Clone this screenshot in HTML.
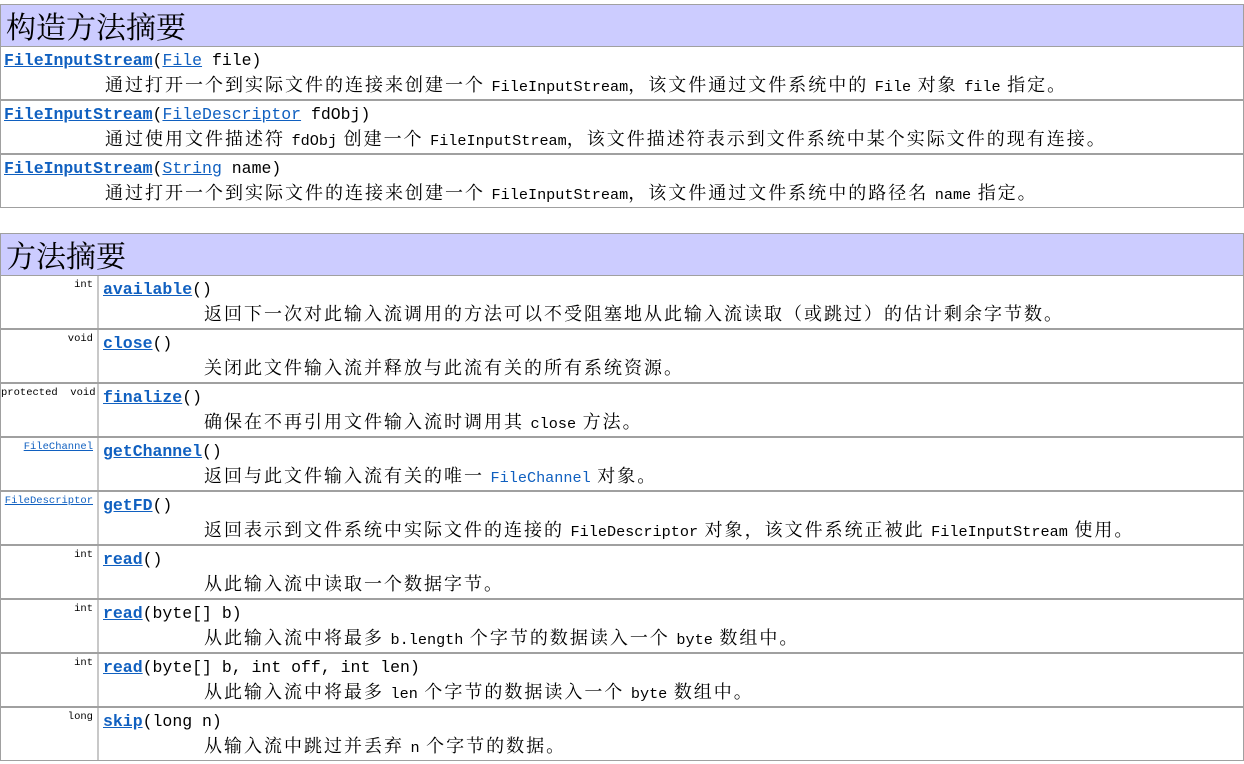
<!DOCTYPE html>
<html><head><meta charset="utf-8"><style>
body{margin:0;background:#fff;width:1244px;height:764px;overflow:hidden;position:relative;font-family:"Liberation Sans","Noto Sans CJK SC",sans-serif;}
.hd{position:absolute;left:0;height:40px;background:#ccccff;border:1px solid #a0a0a0;font-size:30px;line-height:40px;padding-left:5px;box-sizing:border-box;width:1244px;font-family:"Noto Serif CJK SC","Noto Sans CJK SC",serif;color:#000}
.row{position:absolute;left:0;width:1244px;height:54px;border:1px solid #a0a0a0;box-sizing:border-box;}
.l{position:absolute;left:0;top:0;width:98px;height:52px;border-right:2px solid #c8c8c8;font-family:"Liberation Mono",monospace;font-size:10.5px;text-align:right;padding:3px 4px 0 0;box-sizing:border-box;white-space:nowrap}
.l a{color:#1060c0;text-decoration:underline}
.sig{position:absolute;top:4px;font-family:"Liberation Mono",monospace;font-size:16.5px;white-space:nowrap;color:#000}
.sig a{color:#1060c0;text-decoration:underline}
.sig b a{font-weight:bold}
.d{position:absolute;top:24px;font-size:18px;letter-spacing:2px;white-space:nowrap;color:#000;font-family:"Liberation Serif","Noto Serif CJK SC",serif}
.m{font-family:"Liberation Mono",monospace;font-size:15.2px;letter-spacing:0}
.d a{color:#1060c0}
</style></head><body>
<div class="hd" style="top:4px;height:43px">构造方法摘要</div>
<div class="row" style="top:46px"><div class="sig" style="left:3px"><b><a>FileInputStream</a></b>(<a>File</a> file)</div><div class="d" style="left:104px">通过打开一个到实际文件的连接来创建一个 <span class="m">FileInputStream</span>，该文件通过文件系统中的 <span class="m">File</span> 对象 <span class="m">file</span> 指定。</div></div>
<div class="row" style="top:100px"><div class="sig" style="left:3px"><b><a>FileInputStream</a></b>(<a>FileDescriptor</a> fdObj)</div><div class="d" style="left:104px">通过使用文件描述符 <span class="m">fdObj</span> 创建一个 <span class="m">FileInputStream</span>，该文件描述符表示到文件系统中某个实际文件的现有连接。</div></div>
<div class="row" style="top:154px"><div class="sig" style="left:3px"><b><a>FileInputStream</a></b>(<a>String</a> name)</div><div class="d" style="left:104px">通过打开一个到实际文件的连接来创建一个 <span class="m">FileInputStream</span>，该文件通过文件系统中的路径名 <span class="m">name</span> 指定。</div></div>

<div class="hd" style="top:233px;height:43px">方法摘要</div>
<div class="row" style="top:275px"><div class="l">int</div><div class="sig" style="left:102px"><b><a>available</a></b>()</div><div class="d" style="left:203px">返回下一次对此输入流调用的方法可以不受阻塞地从此输入流读取（或跳过）的估计剩余字节数。</div></div>
<div class="row" style="top:329px"><div class="l">void</div><div class="sig" style="left:102px"><b><a>close</a></b>()</div><div class="d" style="left:203px">关闭此文件输入流并释放与此流有关的所有系统资源。</div></div>
<div class="row" style="top:383px"><div class="l">protected&nbsp; void</div><div class="sig" style="left:102px"><b><a>finalize</a></b>()</div><div class="d" style="left:203px">确保在不再引用文件输入流时调用其 <span class="m">close</span> 方法。</div></div>
<div class="row" style="top:437px"><div class="l"><a>FileChannel</a></div><div class="sig" style="left:102px"><b><a>getChannel</a></b>()</div><div class="d" style="left:203px">返回与此文件输入流有关的唯一 <a class="m">FileChannel</a> 对象。</div></div>
<div class="row" style="top:491px"><div class="l"><a>FileDescriptor</a></div><div class="sig" style="left:102px"><b><a>getFD</a></b>()</div><div class="d" style="left:203px">返回表示到文件系统中实际文件的连接的 <span class="m">FileDescriptor</span> 对象，该文件系统正被此 <span class="m">FileInputStream</span> 使用。</div></div>
<div class="row" style="top:545px"><div class="l">int</div><div class="sig" style="left:102px"><b><a>read</a></b>()</div><div class="d" style="left:203px">从此输入流中读取一个数据字节。</div></div>
<div class="row" style="top:599px"><div class="l">int</div><div class="sig" style="left:102px"><b><a>read</a></b>(byte[] b)</div><div class="d" style="left:203px">从此输入流中将最多 <span class="m">b.length</span> 个字节的数据读入一个 <span class="m">byte</span> 数组中。</div></div>
<div class="row" style="top:653px"><div class="l">int</div><div class="sig" style="left:102px"><b><a>read</a></b>(byte[] b, int off, int len)</div><div class="d" style="left:203px">从此输入流中将最多 <span class="m">len</span> 个字节的数据读入一个 <span class="m">byte</span> 数组中。</div></div>
<div class="row" style="top:707px"><div class="l">long</div><div class="sig" style="left:102px"><b><a>skip</a></b>(long n)</div><div class="d" style="left:203px">从输入流中跳过并丢弃 <span class="m">n</span> 个字节的数据。</div></div>
</body></html>
